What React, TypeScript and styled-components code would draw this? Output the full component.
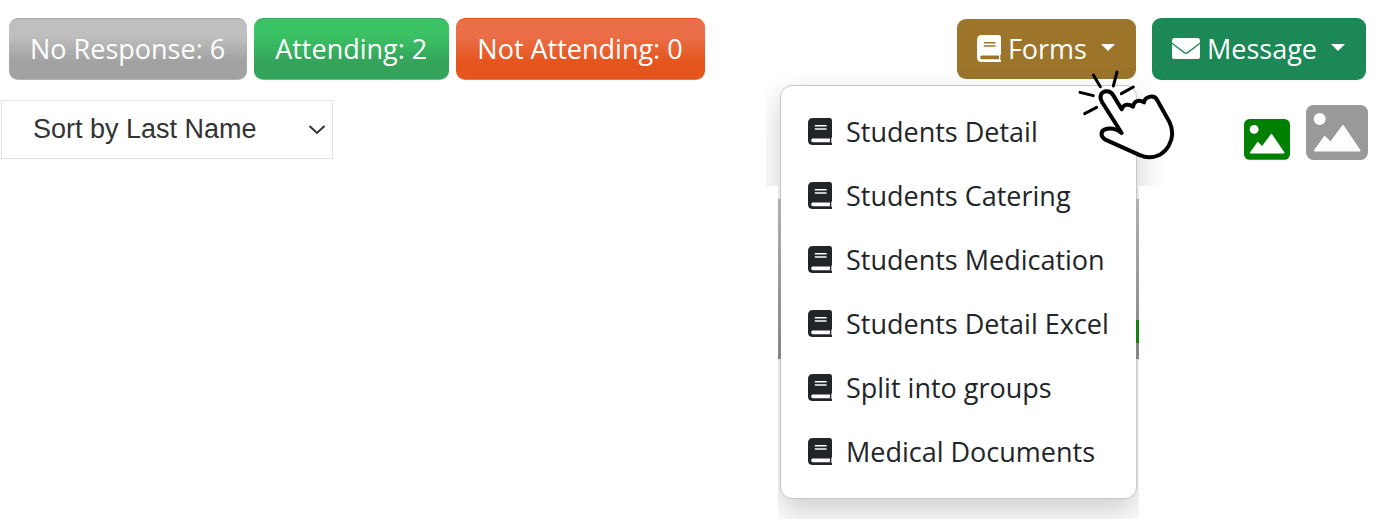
import React from "react";
import styled, { createGlobalStyle } from "styled-components";

const GlobalStyle = createGlobalStyle`
  *, *::before, *::after { box-sizing: border-box; }
  body {
    margin: 0;
    background: #fff;
    color: #212529;
    font-family: "Open Sans", "Noto Sans", sans-serif;
    font-size: 27px;
  }
  button, select { font: inherit; margin: 0; }
`;

const Page = styled.main`
  display: flex;
  flex-direction: column;
  gap: 20px;
  min-height: 100vh;
  padding-top: 18px;
`;

const Toolbar = styled.header`
  display: flex;
  align-items: center;
  justify-content: space-between;
  padding: 0 15px 0 9px;
`;

const ButtonGroup = styled.div<{ $gap: number }>`
  display: flex;
  align-items: center;
  gap: ${(p) => p.$gap}px;
`;

const StatusButton = styled.button<{ $from: string; $to: string; $top: string; $bottom: string }>`
  height: 62px;
  padding: 0 21px 2px 20px;
  border: 1px solid transparent;
  border-top-color: ${(p) => p.$top};
  border-bottom-color: ${(p) => p.$bottom};
  border-radius: 9px;
  background: linear-gradient(${(p) => p.$from} 28%, ${(p) => p.$to} 70%) border-box;
  color: #fff;
  white-space: nowrap;
`;

const ActionButton = styled.button<{ $color: string; $height: number }>`
  display: flex;
  align-items: center;
  height: ${(p) => p.$height}px;
  padding: 0 21px 2px 20px;
  border: 0;
  border-radius: 9px;
  background: ${(p) => p.$color};
  color: #fff;
  white-space: nowrap;

  svg { margin-right: 7px; }
`;

const Caret = styled.span`
  margin: 0 0 1px 14px;
  border: 7px solid transparent;
  border-top-color: #fff;
  border-bottom: 0;
`;

const Dropdown = styled.div`
  position: relative;
`;

/* The shadow spreads sideways beside the toolbar only; lower down it stops at the menu's edge. */
const Menu = styled.ul`
  position: absolute;
  z-index: 1;
  top: 66px;
  right: -1px;
  margin: 0;
  padding: 14px 0;
  width: 357px;
  list-style: none;
  border: 1px solid #c6c6c6;
  border-radius: 12px;
  background: #fff;
  box-shadow: 0 12px 30px rgba(0, 0, 0, 0.2);
  clip-path: polygon(
    -14px -20px, calc(100% + 26px) -20px, calc(100% + 26px) 101px,
    calc(100% + 2px) 101px, calc(100% + 2px) calc(100% + 40px),
    -2px calc(100% + 40px), -2px 101px, -14px 101px
  );

  &::before, &::after {
    content: "";
    position: absolute;
    top: 113px;
    width: 3px;
    height: 160px;
    background: linear-gradient(#b0b0b0, #858585);
  }
  &::before { left: -3px; }
  &::after {
    right: -3px;
    background: linear-gradient(transparent 121px, #168016 121px 144px, transparent 144px),
      linear-gradient(#b0b0b0, #858585);
  }
`;

const MenuLink = styled.a`
  display: flex;
  align-items: center;
  gap: 14px;
  height: 64px;
  padding: 0 27px 2px;
  color: #212529;
  text-decoration: none;
  white-space: nowrap;
`;

const BookSvg = styled.svg`
  width: 24px;
  height: 27px;
  flex: none;
`;

const BookIcon = () => (
  <BookSvg viewBox="0 0 24 27" fill="currentColor" fillRule="evenodd" aria-hidden="true">
    <path d="M5 0H21.6Q24 0 24 2.4V18.5Q24 19.8 23.3 20.3V25H24V27H5Q0 27 0 22.5V4.8Q0 0 5 0ZM6.8 7V8.5H18.6V7ZM6.8 10.3V11.8H18.6V10.3ZM4.8 20.6Q3.2 20.6 3.2 22.4T4.8 24.2H22V20.6Z" />
  </BookSvg>
);

const MailSvg = styled.svg`
  width: 28px;
  height: 21px;
  flex: none;
`;

const MailIcon = () => (
  <MailSvg viewBox="0 0 28 21" fill="currentColor" aria-hidden="true">
    <path d="M2.6 0H25.4Q28 0 28 2.6V4.4L15.6 13.8Q14 15 12.4 13.8L0 4.4V2.6Q0 0 2.6 0Z" />
    <path d="M0 6L11.6 14.9Q14 16.6 16.4 14.9L28 6V18.4Q28 21 25.4 21H2.6Q0 21 0 18.4Z" />
  </MailSvg>
);

const Pointer = styled.svg`
  position: absolute;
  z-index: 2;
  top: 46px;
  right: -54px;
  width: 120px;
  height: 110px;
  pointer-events: none;
`;

const SubBar = styled.section`
  display: flex;
  align-items: flex-start;
  justify-content: space-between;
  padding: 0 13px 0 1px;
`;

const SelectBox = styled.div`
  position: relative;
  width: 332px;

  svg {
    position: absolute;
    top: 24px;
    right: 7px;
    pointer-events: none;
  }
`;

const Select = styled.select`
  appearance: none;
  width: 100%;
  height: 59px;
  padding: 0 32px 2px 31px;
  border: 1px solid #e2e2e2;
  border-radius: 0;
  background: #fff;
  color: #333;
  font-family: "Liberation Sans", Arial, sans-serif;
`;

const ViewButtons = styled.div`
  display: flex;
  align-items: flex-end;
  gap: 16px;
  padding-top: 5px;
`;

const ViewButton = styled.button<{ $color: string; $width: number }>`
  display: flex;
  padding: 0;
  border: 0;
  background: none;
  color: ${(p) => p.$color};

  svg {
    width: ${(p) => p.$width}px;
    height: auto;
  }
`;

const PictureIcon = () => (
  <svg viewBox="0 0 62 55" aria-hidden="true">
    <rect width="62" height="55" rx="7.5" fill="currentColor" />
    <circle cx="13.7" cy="14" r="6" fill="#fff" />
    <path
      d="M9 45.5L18.7 32L24.4 38L37 21L53.5 45.5Z"
      fill="#fff"
      stroke="#fff"
      strokeWidth="2"
      strokeLinejoin="round"
    />
  </svg>
);

const forms = [
  "Students Detail",
  "Students Catering",
  "Students Medication",
  "Students Detail Excel",
  "Split into groups",
  "Medical Documents",
];

export default function App() {
  return (
    <>
      <GlobalStyle />
      <Page>
        <Toolbar>
          <ButtonGroup $gap={7}>
            <StatusButton $from="#bfbfbf" $to="#a2a2a2" $top="#a6a6a6" $bottom="#b4b4b4">
              No Response: 6
            </StatusButton>
            <StatusButton $from="#3bc264" $to="#33a45a" $top="#35a75c" $bottom="#5fc783">
              Attending: 2
            </StatusButton>
            <StatusButton $from="#ea6f49" $to="#e5561e" $top="#e5561e" $bottom="#ea7550">
              Not Attending: 0
            </StatusButton>
          </ButtonGroup>
          <ButtonGroup $gap={16}>
            <Dropdown>
              <ActionButton $color="#9c752b" $height={60} aria-haspopup="true" aria-expanded="true">
                <BookIcon />
                Forms
                <Caret />
              </ActionButton>
              <Menu>
                {forms.map((name) => (
                  <li key={name}>
                    <MenuLink href="#">
                      <BookIcon />
                      {name}
                    </MenuLink>
                  </li>
                ))}
              </Menu>
              <Pointer viewBox="0 0 360 330" fill="none" stroke="#000" strokeLinecap="round" strokeLinejoin="round" aria-hidden="true">
                <path
                  d="M96 111C86 93 94 81 108 79C118 78 125 83 130 91L155 133C159 119 174 114 189 125C191 109 206 102 222 112C224 96 251 87 261 104L298 170C322 220 290 276 237 277C228 277 219 275 211 271L106 224C93 217 90 200 103 194C119 187 140 190 155 204Z"
                  fill="#fff"
                  strokeWidth="12"
                />
                <path d="M70 30L91 65M141 21L130 63M30 82L70 92M190 66L154 86M44 146L80 127" strokeWidth="9" />
              </Pointer>
            </Dropdown>
            <ActionButton $color="#1b8855" $height={62} aria-haspopup="true">
              <MailIcon />
              Message
              <Caret />
            </ActionButton>
          </ButtonGroup>
        </Toolbar>
        <SubBar>
          <SelectBox>
            <Select aria-label="Sort students" defaultValue="last">
              <option value="last">Sort by Last Name</option>
              <option value="first">Sort by First Name</option>
            </Select>
            <svg width="18" height="12" viewBox="0 0 18 12" fill="none" stroke="#333" strokeWidth="2" aria-hidden="true">
              <path d="M1.5 2L9 9L16.5 2" />
            </svg>
          </SelectBox>
          <ViewButtons>
            <ViewButton $color="#008000" $width={46} aria-label="Small photos">
              <PictureIcon />
            </ViewButton>
            <ViewButton $color="#999" $width={62} aria-label="Large photos">
              <PictureIcon />
            </ViewButton>
          </ViewButtons>
        </SubBar>
      </Page>
    </>
  );
}
